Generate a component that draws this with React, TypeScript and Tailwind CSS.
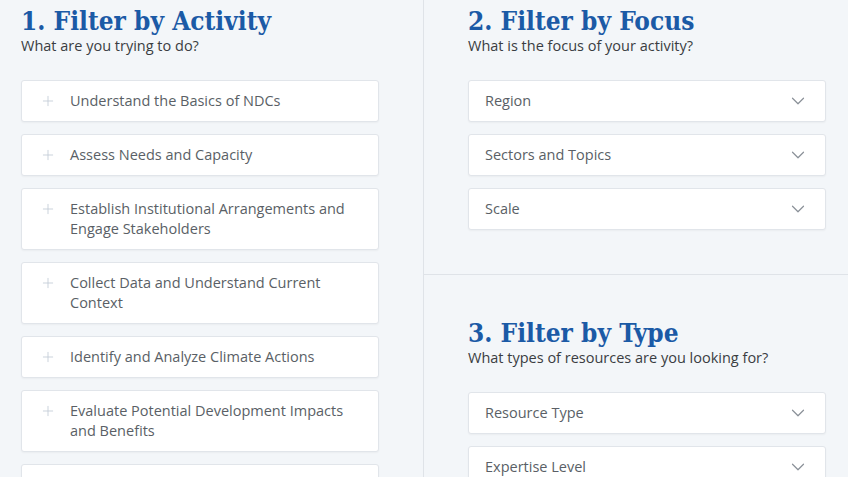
import { ChevronDown, Plus } from 'lucide-react';

const ACTIVITIES = [
  'Understand the Basics of NDCs',
  'Assess Needs and Capacity',
  'Establish Institutional Arrangements and Engage Stakeholders',
  'Collect Data and Understand Current Context',
  'Identify and Analyze Climate Actions',
  'Evaluate Potential Development Impacts and Benefits',
  'Set Targets and Goals',
];

const heading = "text-[#1b5aa6] font-bold text-[26px] leading-[30px] [font-family:'DejaVu_Serif_Condensed','DejaVu_Serif',serif]";
const sub = 'text-[14.5px] leading-[18px] text-[#3a3d42] mt-[1px]';

function Select({ label }: { label: string }) {
  return (
    <div className="h-[42px] bg-white border border-[#e1e5ea] rounded-[3px] shadow-[0_1px_2px_rgba(0,0,0,0.04)] flex items-center justify-between pl-4 pr-4">
      <span className="text-[14.5px] text-[#5a5f66]">{label}</span>
      <ChevronDown className="w-[22px] h-[22px] text-[#8a9098]" strokeWidth={1.3} />
    </div>
  );
}

export default function App() {
  return (
    <div className="w-[848px] h-[477px] overflow-hidden bg-[#f3f6f9] flex [font-family:'Open_Sans',sans-serif]">
      <div className="w-[424px] pl-[21px] pr-[44px] pt-[6px] border-r border-[#dfe3e8]">
        <h2 className={heading}>1. Filter by Activity</h2>
        <p className={sub}>What are you trying to do?</p>
        <div className="mt-[25px] flex flex-col gap-[12px]">
          {ACTIVITIES.map(a => (
            <div key={a} className="min-h-[42px] bg-white border border-[#e1e5ea] rounded-[3px] shadow-[0_1px_2px_rgba(0,0,0,0.04)] flex items-start py-[10px] pl-[18px] pr-6">
              <Plus className="w-[16px] h-[16px] mt-[2px] text-[#c3ccd6] shrink-0" strokeWidth={1.3} />
              <span className="ml-[14px] text-[14.5px] leading-[20px] text-[#5a5f66]">{a}</span>
            </div>
          ))}
        </div>
      </div>
      <div className="flex-1 flex flex-col">
        <div className="pl-[44px] pr-[22px] pt-[6px] pb-[44px] border-b border-[#dfe3e8]">
          <h2 className={heading}>2. Filter by Focus</h2>
          <p className={sub}>What is the focus of your activity?</p>
          <div className="mt-[25px] flex flex-col gap-[12px]">
            <Select label="Region" />
            <Select label="Sectors and Topics" />
            <Select label="Scale" />
          </div>
        </div>
        <div className="pl-[44px] pr-[22px] pt-[43px]">
          <h2 className={heading}>3. Filter by Type</h2>
          <p className={sub}>What types of resources are you looking for?</p>
          <div className="mt-[25px] flex flex-col gap-[12px]">
            <Select label="Resource Type" />
            <Select label="Expertise Level" />
          </div>
        </div>
      </div>
    </div>
  );
}
